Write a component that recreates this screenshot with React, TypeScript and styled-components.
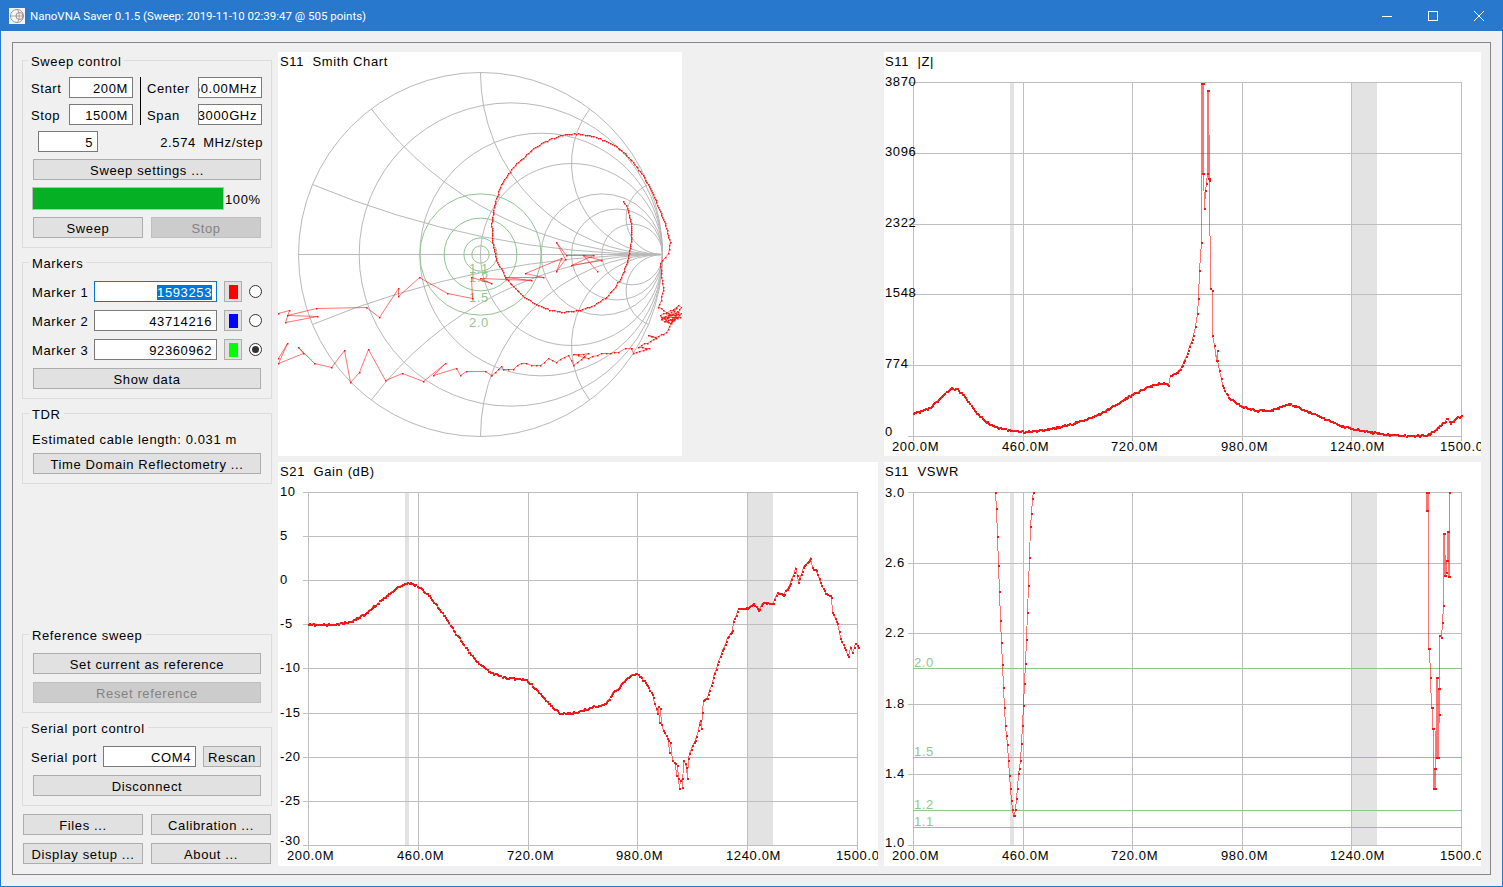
import styled, { createGlobalStyle } from "styled-components";

type Pt = [number, number];

const GlobalStyle = createGlobalStyle`
  html, body { margin: 0; padding: 0; background: #f0f0f0; }
  body {
    font-family: "Liberation Sans", Arial, sans-serif;
    font-size: 13px;
    letter-spacing: 0.62px;
    color: #000;
  }
`;

/* ---------- trace helpers ---------- */

// adds samples between the key points so the line looks like a real 505 point sweep
function trace(keys: Pt[], step: number, jitter: number, alongX = true, seed = 11): Pt[] {
  let s = seed;
  const rnd = () => {
    s = (s * 16807) % 2147483647;
    return s / 2147483647 - 0.5;
  };
  const out: Pt[] = [];
  keys.forEach((p, i) => {
    out.push(p);
    const next = keys[i + 1];
    if (!next) return;
    const dx = next[0] - p[0];
    const dy = next[1] - p[1];
    const n = Math.floor((alongX ? Math.abs(dx) : Math.hypot(dx, dy)) / step);
    for (let k = 1; k < n; k++) {
      const t = k / n;
      out.push([p[0] + dx * t, p[1] + dy * t + rnd() * jitter]);
    }
  });
  return out.map(([x, y]) => [Math.round(x), Math.round(y)] as Pt);
}

const fromZoom = (pts: Pt[], x0: number, y0: number): Pt[] =>
  pts.map(([x, y]) => [x0 + x / 3, y0 + y / 3] as Pt);

const zData: Pt[] = [
  [913, 413], [930, 407], [940, 397], [950, 388], [956, 388], [965, 397], [975, 411], [985, 421],
  [995, 426], [1010, 430], [1025, 431], [1045, 429], [1065, 425], [1085, 419], [1100, 413], [1117, 403],
  [1133, 393], [1150, 385], [1163, 382], [1168, 385], [1170, 375], [1177, 372], [1182, 365], [1188, 350],
  [1193, 335], [1195, 326], [1197, 313], [1198, 298], [1199, 270], [1201, 242], [1201, 83], [1202, 173],
  [1202, 83], [1203, 173], [1203, 83], [1203, 173], [1204, 208], [1205, 190], [1206, 183], [1207, 173],
  [1207, 90], [1208, 178], [1208, 90], [1209, 178], [1209, 180], [1210, 288], [1212, 290], [1212, 335],
  [1214, 345], [1216, 360], [1217, 350], [1217, 360], [1219, 370], [1222, 385], [1228, 397], [1240, 405],
  [1255, 410], [1270, 410], [1288, 403], [1300, 408], [1320, 416], [1340, 425], [1360, 430], [1380, 433],
  [1400, 435], [1420, 435], [1430, 433], [1440, 425], [1447, 418], [1450, 423], [1455, 418], [1461, 415],
];

const gainData: Pt[] = [
  [308, 624], [335, 624], [350, 621], [365, 613], [380, 600], [395, 588], [405, 583], [412, 583],
  [420, 587], [430, 597], [445, 617], [460, 640], [475, 660], [490, 672], [505, 677], [525, 679],
  [535, 688], [550, 705], [560, 713], [575, 712], [590, 707], [605, 703], [612, 693], [620, 685],
  [627, 677], [635, 673], [640, 676], [647, 685], [653, 697], [657, 713], [658, 706], [659, 722],
  [660, 708], [661, 724], [663, 730], [668, 740], [669, 752], [670, 742], [672, 760], [675, 763],
  [676, 775], [677, 765], [678, 778], [679, 788], [680, 780], [682, 778], [682, 787], [683, 760],
  [686, 767], [687, 778], [688, 758], [692, 745], [695, 740], [700, 720], [701, 728], [702, 712],
  [703, 700], [707, 698], [713, 677], [717, 664], [722, 650], [727, 637], [732, 630], [733, 621],
  [738, 608], [747, 608], [753, 603], [758, 610], [763, 602], [773, 603], [777, 592], [783, 595],
  [790, 583], [795, 568], [798, 582], [803, 567], [810, 558], [812, 567], [816, 570], [820, 582],
  [825, 593], [831, 597], [832, 612], [837, 623], [840, 638], [844, 647], [848, 656], [850, 647],
  [852, 652], [855, 643], [858, 647],
];

const vswrDip: Pt[] = [
  [995, 492], [996, 508], [997, 536], [998, 565], [999, 591], [1000, 620], [1001, 642], [1002, 664],
  [1003, 687], [1004, 707], [1005, 725], [1006, 735], [1007, 744], [1008, 760], [1009, 775], [1010, 788],
  [1011, 800], [1012, 809], [1013, 815], [1014, 815], [1015, 809], [1016, 798], [1017, 788], [1018, 773],
  [1019, 768], [1020, 760], [1021, 743], [1022, 725], [1023, 705], [1024, 683], [1025, 663], [1026, 639],
  [1027, 612], [1028, 585], [1029, 557], [1030, 526], [1031, 513], [1032, 498], [1033, 492],
];

const vswrHigh: Pt[] = [
  [1426, 492], [1426, 510], [1427, 492], [1427, 510], [1428, 492], [1428, 648], [1429, 648], [1430, 677],
  [1431, 707], [1432, 707], [1432, 728], [1433, 728], [1433, 788], [1434, 768], [1434, 788], [1435, 768],
  [1435, 788], [1436, 677], [1436, 757], [1437, 677], [1437, 757], [1438, 688], [1438, 757], [1439, 688],
  [1439, 714], [1439, 635], [1441, 637], [1442, 622], [1443, 605], [1443, 533], [1444, 575], [1444, 533],
  [1445, 575], [1446, 572], [1446, 560], [1447, 560], [1447, 531], [1448, 576], [1448, 531], [1449, 576],
  [1449, 492],
];

// s11 on the Smith chart: first the clean loop, then the noisy tail running out to the left
const smithLoop: Pt[] = fromZoom([
  [1035, 452], [1050, 480], [1058, 520], [1060, 560], [1055, 595], [1048, 630], [1030, 680], [1010, 710],
  [980, 745], [940, 767], [900, 780], [850, 785], [800, 775], [750, 748], [710, 715], [680, 680],
  [655, 630], [642, 570], [640, 520], [648, 465], [665, 410], [690, 370], [710, 345], [770, 290],
  [820, 265], [860, 253], [900, 250], [940, 257], [990, 275], [1030, 300], [1060, 330], [1090, 370],
  [1120, 420], [1140, 470], [1160, 520], [1175, 575],
], 278, 50);

const smithCluster: Pt[] = fromZoom([
  [1175, 575], [1170, 610], [1160, 620], [1145, 640], [1150, 680], [1155, 720], [1148, 750], [1140, 770],
  [1170, 790], [1200, 765], [1208, 770], [1185, 810], [1150, 800], [1210, 790], [1175, 820], [1145, 795],
  [1195, 775], [1160, 812], [1205, 800], [1170, 800], [1190, 790], [1178, 818], [1150, 808], [1198, 782],
  [1165, 845], [1130, 860], [1110, 855], [1135, 865], [1080, 890], [1113, 895], [1065, 910], [1060, 893],
], 278, 50);

const smithBand: Pt[] = fromZoom([
  [1060, 893], [1040, 895], [1020, 905], [995, 910], [970, 910], [930, 925], [885, 912], [930, 910],
  [885, 945], [870, 915], [835, 935], [810, 925], [785, 945], [760, 945], [730, 938], [705, 957],
  [675, 958], [670, 948], [640, 975],
], 278, 50);

const smithFar: Pt[] = fromZoom([
  [640, 975], [620, 963], [565, 963], [545, 975], [535, 955], [465, 975], [500, 940], [435, 993],
  [372, 970], [322, 990], [270, 897], [243, 965], [215, 997], [197, 900], [160, 950], [108, 940],
  [60, 890], [75, 910], [0, 938], [27, 880], [0, 925],
], 278, 50);

const smithInner: Pt[] = fromZoom([
  [0, 790], [32, 780], [20, 815], [118, 798], [28, 795], [115, 773], [265, 770], [303, 800],
  [360, 715], [360, 738], [423, 680], [507, 728], [582, 745], [580, 680], [640, 698], [605, 685],
  [760, 690], [680, 680], [795, 680], [740, 670], [850, 625], [835, 662], [860, 628], [835, 575],
  [865, 615], [945, 615], [880, 645], [970, 630], [915, 615], [958, 663],
], 278, 50);

/* ---------- window chrome ---------- */

const Window = styled.div`
  height: 887px;
  box-sizing: border-box;
  border: 1px solid #2878cd;
  background: #f0f0f0;
  display: flex;
  flex-direction: column;
  overflow: hidden;
`;

const TitleBar = styled.header`
  height: 30px;
  flex: none;
  background: #2878cd;
  color: #fff;
  display: flex;
  align-items: center;
  padding-left: 8px;
`;

const TitleIcon = styled.svg`
  margin-right: 5px;
  flex: none;
`;

const TitleText = styled.span`
  flex: 1;
  font-family: Roboto, sans-serif;
  font-size: 11.5px;
  letter-spacing: 0;
`;

const WinButton = styled.span`
  width: 46px;
  height: 30px;
  display: flex;
  align-items: center;
  justify-content: center;
`;

const Frame = styled.main`
  flex: 1;
  margin: 11px;
  padding: 9px 9px 8px;
  border: 1px solid #85858f;
  display: flex;
  gap: 6px;
  min-height: 0;
`;

/* ---------- left column ---------- */

const Sidebar = styled.aside`
  width: 250px;
  flex: none;
  display: flex;
  flex-direction: column;
  gap: 6px;
`;

const Group = styled.fieldset<{ $pad?: number; $push?: boolean }>`
  margin: ${(p) => (p.$push ? "auto 0 0" : "0")};
  min-width: 0;
  box-sizing: border-box;
  border: 1px solid #dcdcdc;
  padding: ${(p) => p.$pad ?? 11}px 8px 9px;
  display: flex;
  flex-direction: column;
`;

const Legend = styled.legend<{ $shift?: number }>`
  margin-left: ${(p) => (p.$shift ?? 0) - 3}px;
  padding: 0 3px;
  height: 16px;
  line-height: 19px;
`;

const Row = styled.div<{ $top?: number; $inset?: number; $gap?: number }>`
  display: flex;
  align-items: center;
  height: 21px;
  margin-top: ${(p) => p.$top ?? 0}px;
  margin-left: ${(p) => p.$inset ?? 0}px;
  margin-right: ${(p) => p.$inset ?? 0}px;
  gap: ${(p) => p.$gap ?? 0}px;
  white-space: nowrap;
`;

const Label = styled.span<{ $w?: number; $shift?: number }>`
  width: ${(p) => (p.$w ? `${p.$w}px` : "auto")};
  margin-left: ${(p) => p.$shift ?? 0}px;
  padding-top: 2px;
  flex: none;
`;

const StepText = styled.span`
  flex: 1;
  padding-top: 2px;
  text-align: right;
  word-spacing: 3px;
`;

const FreqGrid = styled.div`
  display: grid;
  grid-template-columns: 38px 64px 14px 51px 64px;
  grid-auto-rows: 21px;
  row-gap: 6px;
  align-items: center;
`;

const Divider = styled.div`
  grid-column: 3;
  grid-row: 1 / span 2;
  width: 1px;
  height: 48px;
  margin-left: 7px;
  background: #000;
`;

const Field = styled.div<{ $w: number; $focus?: boolean; $inset?: number }>`
  width: ${(p) => p.$w}px;
  height: 21px;
  margin-left: ${(p) => p.$inset ?? 0}px;
  flex: none;
  box-sizing: border-box;
  border: 1px solid ${(p) => (p.$focus ? "#0078d7" : "#7a7a7a")};
  background: #fff;
  padding: 2px 4px 0 0;
  display: flex;
  align-items: center;
  justify-content: flex-end;
  overflow: hidden;
  white-space: nowrap;
`;

const Selected = styled.span`
  background: #0078d7;
  color: #fff;
  line-height: 15px;
`;

const Button = styled.button<{ $w?: number; $wide?: boolean; $left?: number }>`
  height: 21px;
  width: ${(p) => (p.$w ? `${p.$w}px` : "auto")};
  margin: ${(p) => (p.$wide ? "0 2px" : `0 0 0 ${p.$left ?? 0}px`)};
  flex: none;
  padding: 2px 0 0;
  box-sizing: border-box;
  border: 1px solid #adadad;
  background: #e1e1e1;
  color: #000;
  font: inherit;
  letter-spacing: inherit;
  white-space: nowrap;

  &:disabled {
    background: #cccccc;
    border-color: #bfbfbf;
    color: #838383;
  }
`;

const Progress = styled.div`
  display: flex;
  align-items: center;
  height: 23px;
  margin: 7px 0 7px 1px;
`;

const ProgressTrack = styled.div`
  width: 192px;
  height: 23px;
  box-sizing: border-box;
  border: 1px solid #bcbcbc;
  background: #06b025;
`;

const ProgressText = styled.span`
  margin-left: 1px;
  padding-top: 2px;
`;

const Swatch = styled.span<{ $color: string }>`
  width: 18px;
  height: 21px;
  margin-left: 7px;
  flex: none;
  box-sizing: border-box;
  border: 1px solid #adadad;
  background: #e1e1e1;
  display: flex;
  align-items: center;
  justify-content: center;

  &::after {
    content: "";
    width: 9px;
    height: 14px;
    background: ${(p) => p.$color};
  }
`;

const Radio = styled.span<{ $on?: boolean }>`
  width: 13px;
  height: 13px;
  margin-left: 7px;
  flex: none;
  box-sizing: border-box;
  border: 1px solid #333;
  border-radius: 50%;
  background: #fff;
  display: flex;
  align-items: center;
  justify-content: center;

  &::after {
    content: "";
    width: 7px;
    height: 7px;
    border-radius: 50%;
    background: ${(p) => (p.$on ? "#333" : "transparent")};
  }
`;

const Note = styled.div`
  height: 15px;
  line-height: 15px;
  margin: 0 0 6px 1px;
  white-space: nowrap;
`;

const BottomRow = styled.div<{ $top: number }>`
  display: flex;
  gap: 8px;
  margin: ${(p) => p.$top}px 1px 0;
`;

const BottomButtons = styled.div`
  margin-top: 2px;
  padding-bottom: 2px;
`;

/* ---------- charts ---------- */

const Charts = styled.section`
  display: grid;
  grid-template-columns: 600px 597px;
  grid-template-rows: 404px 404px;
  gap: 6px;
`;

const Plot = styled.svg<{ $smooth?: boolean }>`
  display: block;
  background: #fff;
  shape-rendering: ${(p) => (p.$smooth ? "auto" : "crispEdges")};
`;

const ChartText = styled.text<{ $green?: boolean }>`
  font-family: "Liberation Sans", Arial, sans-serif;
  font-size: 13px;
  letter-spacing: 0.62px;
  white-space: pre;
  fill: ${(p) => (p.$green ? "#90c690" : "#000")};
`;

const GRID = "#bebebe";
const GREEN = "#8fc48f";

function Trace({ points }: { points: Pt[] }) {
  const line = points.map(([x, y]) => `${x + 0.5},${y + 0.5}`).join(" ");
  const dots = points.map(([x, y]) => `M${x} ${y}h1.5v1.5h-1.5z`).join("");
  return (
    <>
      <polyline points={line} fill="none" stroke="#ff0000" strokeOpacity={0.55} />
      <path d={dots} fill="#f01818" />
    </>
  );
}

type ChartRow = { y: number; label: string; drop?: number };

type ChartProps = {
  title: string;
  box: [number, number, number, number];
  columns: number[];
  rows: ChartRow[];
  bands: [number, number][];
  limits?: { y: number; label: string }[];
  traces: Pt[][];
};

const freqLabels = ["200.0M", "460.0M", "720.0M", "980.0M", "1240.0M", "1500.0M"];

function LineChart({ title, box, columns, rows, bands, limits, traces }: ChartProps) {
  const [bx, by, bw, bh] = box;
  const left = columns[0];
  const right = columns[columns.length - 1];
  const top = rows[0].y;
  const bottom = rows[rows.length - 1].y;
  return (
    <Plot width={bw} height={bh} viewBox={`${bx} ${by} ${bw} ${bh}`}>
      <ChartText x={left - 28} y={by + 14}>{title}</ChartText>
      {bands.map(([a, b]) => (
        <rect key={a} x={a} y={top} width={b - a} height={bottom - top} fill="#e3e3e3" />
      ))}
      {columns.map((x) => (
        <line key={x} x1={x + 0.5} x2={x + 0.5} y1={top - 0.5} y2={bottom + 5} stroke={GRID} />
      ))}
      {rows.map((r) => (
        <g key={r.y}>
          <line x1={left - 5} x2={right + 1} y1={r.y + 0.5} y2={r.y + 0.5} stroke={GRID} />
          <ChartText x={left - 28} y={r.y + (r.drop ?? 4)}>{r.label}</ChartText>
        </g>
      ))}
      {limits?.map((l) => (
        <g key={l.y}>
          <line x1={left} x2={right + 1} y1={l.y + 0.5} y2={l.y + 0.5} stroke={GREEN} />
          <ChartText $green x={left + 1} y={l.y - 1}>{l.label}</ChartText>
        </g>
      ))}
      {traces.map((t, i) => (
        <Trace key={i} points={t} />
      ))}
      {columns.map((x, i) => (
        <ChartText key={x} x={x - 21} y={bottom + 15}>{freqLabels[i]}</ChartText>
      ))}
    </Plot>
  );
}

const SMITH = { cx: 480.5, cy: 254.5, r: 182 };

function reactanceArc(x: number, upper: boolean) {
  const { cx, cy, r } = SMITH;
  const re = (x * x - 1) / (x * x + 1);
  const im = (2 * x) / (x * x + 1);
  const ex = cx + r * re;
  const ey = upper ? cy - r * im : cy + r * im;
  return `M${cx + r} ${cy}A${r / x} ${r / x} 0 0 ${upper ? 1 : 0} ${ex} ${ey}`;
}

function SmithChart() {
  const { cx, cy, r } = SMITH;
  return (
    <Plot $smooth width={404} height={404} viewBox="278 52 404 404">
      <ChartText x={280} y={66}>S11  Smith Chart</ChartText>
      <g fill="none" stroke="#b8b8b8">
        <circle cx={cx} cy={cy} r={r} />
        <line x1={cx - r} x2={cx + r} y1={cy} y2={cy} />
        {[0.2, 0.5, 1, 2, 3, 5].map((v) => (
          <circle key={v} cx={cx + (r * v) / (1 + v)} cy={cy} r={r / (1 + v)} />
        ))}
        {[0.2, 0.5, 1, 2, 5].map((v) => (
          <g key={v}>
            <path d={reactanceArc(v, true)} />
            <path d={reactanceArc(v, false)} />
          </g>
        ))}
      </g>
      <g fill="none" stroke={GREEN}>
        {[1.1, 1.2, 1.5, 2].map((v) => (
          <circle key={v} cx={cx} cy={cy} r={(r * (v - 1)) / (v + 1)} />
        ))}
      </g>
      <ChartText $green x={469} y={273}>1.1</ChartText>
      <ChartText $green x={469} y={282}>1.2</ChartText>
      <ChartText $green x={469} y={302}>1.5</ChartText>
      <ChartText $green x={469} y={327}>2.0</ChartText>
      <Trace points={trace(smithInner, 99, 0, false)} />
      <Trace points={trace(smithLoop, 2.2, 0.7, false)} />
      <Trace points={trace(smithCluster, 3, 1.2, false)} />
      <Trace points={trace(smithBand, 4, 1.2, false)} />
      <Trace points={trace(smithFar, 99, 0, false)} />
    </Plot>
  );
}

const rightColumns = [913, 1023, 1132, 1242, 1351, 1461];
const gainColumns = [308, 418, 528, 637, 747, 857];

export default function App() {
  return (
    <>
      <GlobalStyle />
      <Window>
        <TitleBar>
          <TitleIcon width="16" height="16" viewBox="0 0 16 16">
            <rect width="16" height="16" fill="#f4f4f4" />
            <circle cx="8" cy="8" r="6.5" fill="none" stroke="#9a9a9a" />
            <circle cx="10.5" cy="8" r="3.5" fill="none" stroke="#b08a80" />
            <path d="M1.5 8h13M8 1.5c3 2 3 11 0 13" fill="none" stroke="#8a8a8a" strokeWidth="0.7" />
          </TitleIcon>
          <TitleText>NanoVNA Saver 0.1.5 (Sweep: 2019-11-10 02:39:47 @ 505 points)</TitleText>
          <WinButton>
            <svg width="10" height="10" viewBox="0 0 10 10">
              <path d="M0 5.5h10" stroke="#fff" />
            </svg>
          </WinButton>
          <WinButton>
            <svg width="10" height="10" viewBox="0 0 10 10">
              <rect x="0.5" y="0.5" width="9" height="9" fill="none" stroke="#fff" />
            </svg>
          </WinButton>
          <WinButton>
            <svg width="10" height="10" viewBox="0 0 10 10">
              <path d="M0 0l10 10M10 0L0 10" stroke="#fff" />
            </svg>
          </WinButton>
        </TitleBar>
        <Frame>
          <Sidebar>
            <Group $pad={9}>
              <Legend>Sweep control</Legend>
              <FreqGrid>
                <Label>Start</Label>
                <Field $w={64}>200M</Field>
                <Divider />
                <Label>Center</Label>
                <Field $w={64}>850.00MHz</Field>
                <Label>Stop</Label>
                <Field $w={64}>1500M</Field>
                <Label>Span</Label>
                <Field $w={64}>1.3000GHz</Field>
              </FreqGrid>
              <Row $top={6}>
                <Field $w={60} $inset={7}>5</Field>
                <StepText>2.574 MHz/step</StepText>
              </Row>
              <Row $top={7}>
                <Button $wide $w={228}>Sweep settings ...</Button>
              </Row>
              <Progress>
                <ProgressTrack />
                <ProgressText>100%</ProgressText>
              </Progress>
              <Row $inset={2} $gap={8}>
                <Button $w={110}>Sweep</Button>
                <Button $w={110} disabled>Stop</Button>
              </Row>
            </Group>

            <Group>
              <Legend $shift={1}>Markers</Legend>
              <Row>
                <Label $w={62} $shift={1}>Marker 1</Label>
                <Field $w={123} $focus><Selected>1593253</Selected></Field>
                <Swatch $color="#ff0000" />
                <Radio />
              </Row>
              <Row $top={8}>
                <Label $w={62} $shift={1}>Marker 2</Label>
                <Field $w={123}>43714216</Field>
                <Swatch $color="#0000ff" />
                <Radio />
              </Row>
              <Row $top={8}>
                <Label $w={62} $shift={1}>Marker 3</Label>
                <Field $w={123}>92360962</Field>
                <Swatch $color="#00ff00" />
                <Radio $on />
              </Row>
              <Row $top={8}>
                <Button $wide $w={228}>Show data</Button>
              </Row>
            </Group>

            <Group>
              <Legend $shift={1}>TDR</Legend>
              <Note>Estimated cable length: 0.031 m</Note>
              <Row>
                <Button $wide $w={228}>Time Domain Reflectometry ...</Button>
              </Row>
            </Group>

            <Group $push>
              <Legend $shift={1}>Reference sweep</Legend>
              <Row>
                <Button $wide $w={228}>Set current as reference</Button>
              </Row>
              <Row $top={8}>
                <Button $wide $w={228} disabled>Reset reference</Button>
              </Row>
            </Group>

            <Group>
              <Legend>Serial port control</Legend>
              <Row>
                <Label $w={72}>Serial port</Label>
                <Field $w={93}>COM4</Field>
                <Button $w={58} $left={7}>Rescan</Button>
              </Row>
              <Row $top={8}>
                <Button $wide $w={228}>Disconnect</Button>
              </Row>
            </Group>

            <BottomButtons>
              <BottomRow $top={0}>
                <Button $w={120}>Files ...</Button>
                <Button $w={120}>Calibration ...</Button>
              </BottomRow>
              <BottomRow $top={8}>
                <Button $w={120}>Display setup ...</Button>
                <Button $w={120}>About ...</Button>
              </BottomRow>
            </BottomButtons>
          </Sidebar>

          <Charts>
            <SmithChart />
            <LineChart
              title="S11  |Z|"
              box={[884, 52, 597, 404]}
              columns={rightColumns}
              rows={[
                { y: 82, label: "3870" },
                { y: 153, label: "3096", drop: 3 },
                { y: 224, label: "2322", drop: 3 },
                { y: 294, label: "1548", drop: 3 },
                { y: 365, label: "774", drop: 3 },
                { y: 436, label: "0", drop: 0 },
              ]}
              bands={[[1010, 1014], [1351, 1377]]}
              traces={[trace(zData, 1.1, 1.6)]}
            />
            <LineChart
              title="S21  Gain (dB)"
              box={[278, 462, 600, 404]}
              columns={gainColumns}
              rows={[
                { y: 492, label: "10" },
                { y: 536, label: "5" },
                { y: 580, label: "0" },
                { y: 624, label: "-5" },
                { y: 668, label: "-10" },
                { y: 713, label: "-15" },
                { y: 757, label: "-20" },
                { y: 801, label: "-25" },
                { y: 845, label: "-30", drop: 0 },
              ]}
              bands={[[405, 409], [747, 773]]}
              traces={[trace(gainData, 1.1, 1.6)]}
            />
            <LineChart
              title="S11  VSWR"
              box={[884, 462, 597, 404]}
              columns={rightColumns}
              rows={[
                { y: 492, label: "3.0", drop: 5 },
                { y: 563, label: "2.6" },
                { y: 633, label: "2.2" },
                { y: 704, label: "1.8" },
                { y: 774, label: "1.4" },
                { y: 845, label: "1.0", drop: 2 },
              ]}
              bands={[[1010, 1014], [1351, 1377]]}
              limits={[
                { y: 668, label: "2.0" },
                { y: 757, label: "1.5" },
                { y: 810, label: "1.2" },
                { y: 827, label: "1.1" },
              ]}
              traces={[trace(vswrDip, 9, 0), trace(vswrHigh, 9, 0)]}
            />
          </Charts>
        </Frame>
      </Window>
    </>
  );
}
